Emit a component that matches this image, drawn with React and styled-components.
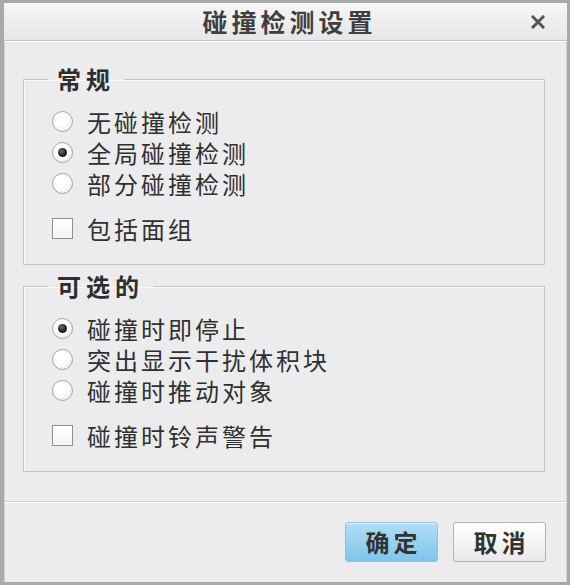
import styled, { createGlobalStyle } from "styled-components";
import { useState } from "react";

const GlobalStyle = createGlobalStyle`
  html, body {
    margin: 0;
    padding: 0;
    background: #ffffff;
  }
  * {
    box-sizing: border-box;
  }
`;

const generalOptions = ["无碰撞检测", "全局碰撞检测", "部分碰撞检测"];
const optionalOptions = ["碰撞时即停止", "突出显示干扰体积块", "碰撞时推动对象"];

export default function App() {
    const [mode, setMode] = useState(1);
    const [action, setAction] = useState(0);
    const [quilts, setQuilts] = useState(false);
    const [bell, setBell] = useState(false);

    return (
        <>
            <GlobalStyle />
            <Dialog>
                <TitleBar>
                    <span />
                    <Title>碰撞检测设置</Title>
                    <CloseButton aria-label="关闭">
                        <svg width="14" height="14" viewBox="0 0 14 14">
                            <path d="M2 2 L12 12 M12 2 L2 12" stroke="#555" strokeWidth="3" strokeLinecap="square" />
                        </svg>
                    </CloseButton>
                </TitleBar>

                <Body>
                    <Group>
                        <Legend>常规</Legend>
                        <Options>
                            {generalOptions.map((label, i) => (
                                <Row key={label} onClick={() => setMode(i)}>
                                    <Radio $checked={mode === i} />
                                    <Label>{label}</Label>
                                </Row>
                            ))}
                        </Options>
                        <CheckRow onClick={() => setQuilts(!quilts)}>
                            <Checkbox $checked={quilts} />
                            <Label>包括面组</Label>
                        </CheckRow>
                    </Group>

                    <Group>
                        <Legend>可选的</Legend>
                        <Options>
                            {optionalOptions.map((label, i) => (
                                <Row key={label} onClick={() => setAction(i)}>
                                    <Radio $checked={action === i} />
                                    <Label>{label}</Label>
                                </Row>
                            ))}
                        </Options>
                        <CheckRow onClick={() => setBell(!bell)}>
                            <Checkbox $checked={bell} />
                            <Label>碰撞时铃声警告</Label>
                        </CheckRow>
                    </Group>
                </Body>

                <Footer>
                    <Button $primary>确定</Button>
                    <Button>取消</Button>
                </Footer>
            </Dialog>
        </>
    );
}

const Dialog = styled.div`
  width: 570px;
  height: 585px;
  display: flex;
  flex-direction: column;
  background: #ececee;
  border: 3px solid #a9a9ab;
  border-left-width: 4px;
  box-shadow: inset 1px 0 0 #d4d4d6, inset -1px 0 0 #d4d4d6;
  font-family: "Noto Sans CJK SC", "Noto Sans", sans-serif;
  color: #2f2f2f;
`;

const TitleBar = styled.div`
  height: 38px;
  display: grid;
  grid-template-columns: 1fr auto 1fr;
  align-items: center;
  background: linear-gradient(#f7f7f8, #e6e6e8);
  border-bottom: 1px solid #c3c3c5;
`;

const Title = styled.div`
  font-size: 25px;
  font-weight: bold;
  letter-spacing: 4px;
  margin-right: -4px;
  color: #3f3f3f;
  line-height: 1;
  padding-left: 4px;
`;

const CloseButton = styled.button`
  justify-self: end;
  margin-right: 18px;
  width: 22px;
  height: 22px;
  padding: 0;
  display: flex;
  align-items: center;
  justify-content: center;
  background: none;
  border: none;
  cursor: pointer;
`;

const Body = styled.div`
  display: flex;
  flex-direction: column;
  gap: 8px;
  padding: 25px 22px 29px 19px;
  border-bottom: 1px solid #cfcfd1;
  box-shadow: inset 0 1px 0 #ffffff, 0 1px 0 #ffffff;
`;

const Group = styled.fieldset`
  margin: 0;
  min-width: 0;
  padding: 14px 20px 20px 28px;
  border: 1px solid #c6c6c8;
  box-shadow: 1px 1px 0 #fafafa inset;
`;

const Legend = styled.legend`
  margin-left: -4px;
  padding: 0 9px;
  font-size: 24px;
  font-weight: bold;
  letter-spacing: 5px;
  line-height: 26px;
  color: #2e2e2e;
`;

const Options = styled.div`
  display: flex;
  flex-direction: column;
`;

const Row = styled.label`
  height: 31px;
  display: flex;
  align-items: center;
  gap: 14px;
  cursor: pointer;
`;

const CheckRow = styled(Row)`
  margin-top: 14px;
`;

const Label = styled.span`
  font-size: 24px;
  letter-spacing: 3px;
  line-height: 1;
  color: #303030;
`;

const Radio = styled.span`
  position: relative;
  width: 21px;
  height: 21px;
  flex-shrink: 0;
  border-radius: 50%;
  border: 1.5px solid #a3a3a5;
  background: radial-gradient(circle at 40% 35%, #ffffff 40%, #e4e4e6 100%);

  &::after {
    content: "";
    display: ${(p) => (p.$checked ? "block" : "none")};
    position: absolute;
    left: 50%;
    top: 50%;
    width: 9px;
    height: 9px;
    margin: -4.5px 0 0 -4.5px;
    border-radius: 50%;
    background: radial-gradient(circle at 40% 35%, #6a6a6a, #111111 70%);
  }
`;

const Checkbox = styled.span`
  width: 21px;
  height: 21px;
  flex-shrink: 0;
  border: 1.5px solid #8f8f91;
  background: linear-gradient(#ffffff, #f4f4f4);
  display: flex;
  align-items: center;
  justify-content: center;

  &::after {
    content: "✓";
    display: ${(p) => (p.$checked ? "block" : "none")};
    font-size: 16px;
    line-height: 1;
    color: #222;
  }
`;

const Footer = styled.div`
  display: flex;
  justify-content: flex-end;
  gap: 15px;
  padding: 20px 21px 0 0;
`;

const Button = styled.button`
  width: 93px;
  height: 40px;
  padding: 0 0 2px 4px;
  font-family: "Noto Sans CJK SC", "Noto Sans", sans-serif;
  font-size: 24px;
  font-weight: bold;
  letter-spacing: 4px;
  color: #333333;
  border-radius: 3px;
  cursor: pointer;
  border: 1px solid ${(p) => (p.$primary ? "#8dc3e0" : "#b3b3b5")};
  background: ${(p) =>
        p.$primary
            ? "linear-gradient(#b0def4, #80c5ea)"
            : "linear-gradient(#ffffff, #e9e9eb)"};
  box-shadow: inset 0 1px 0 rgba(255, 255, 255, 0.6);
`;
